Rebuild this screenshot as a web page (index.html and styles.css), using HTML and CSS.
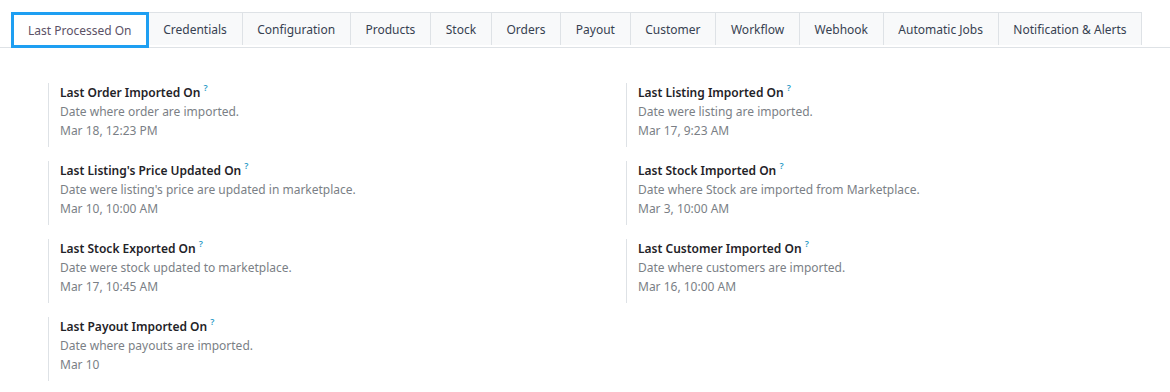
FILE: index.html
```html
<!DOCTYPE html>
<html lang="en">

<head>
    <meta charset="UTF-8">
    <meta name="viewport" content="width=device-width, initial-scale=1.0">
    <title>Last Processed On</title>
    <link rel="stylesheet" href="styles.css">
</head>

<body>

    <ul class="tabs">
        <li class="tab active">Last Processed On</li>
        <li class="tab">Credentials</li>
        <li class="tab">Configuration</li>
        <li class="tab">Products</li>
        <li class="tab">Stock</li>
        <li class="tab">Orders</li>
        <li class="tab">Payout</li>
        <li class="tab">Customer</li>
        <li class="tab">Workflow</li>
        <li class="tab">Webhook</li>
        <li class="tab">Automatic Jobs</li>
        <li class="tab">Notification &amp; Alerts</li>
    </ul>

    <div class="fields">
        <div class="field">
            <div class="label">Last Order Imported On <sup class="help">?</sup></div>
            <div class="desc">Date where order are imported.</div>
            <div class="value">Mar 18, 12:23 PM</div>
        </div>
        <div class="field">
            <div class="label">Last Listing Imported On <sup class="help">?</sup></div>
            <div class="desc">Date were listing are imported.</div>
            <div class="value">Mar 17, 9:23 AM</div>
        </div>
        <div class="field">
            <div class="label">Last Listing's Price Updated On <sup class="help">?</sup></div>
            <div class="desc">Date were listing's price are updated in marketplace.</div>
            <div class="value">Mar 10, 10:00 AM</div>
        </div>
        <div class="field">
            <div class="label">Last Stock Imported On <sup class="help">?</sup></div>
            <div class="desc">Date where Stock are imported from Marketplace.</div>
            <div class="value">Mar 3, 10:00 AM</div>
        </div>
        <div class="field">
            <div class="label">Last Stock Exported On <sup class="help">?</sup></div>
            <div class="desc">Date were stock updated to marketplace.</div>
            <div class="value">Mar 17, 10:45 AM</div>
        </div>
        <div class="field">
            <div class="label">Last Customer Imported On <sup class="help">?</sup></div>
            <div class="desc">Date where customers are imported.</div>
            <div class="value">Mar 16, 10:00 AM</div>
        </div>
        <div class="field">
            <div class="label">Last Payout Imported On <sup class="help">?</sup></div>
            <div class="desc">Date where payouts are imported.</div>
            <div class="value">Mar 10</div>
        </div>
    </div>

</body>

</html>
```

FILE: styles.css
```css
body {
    font-family: "Noto Sans", sans-serif;
    font-size: 12px;
    margin: 0;
    padding: 12px 0 0 0;
    background-color: #fff;
    color: #212529;
}

.tabs {
    display: flex;
    list-style: none;
    margin: 0;
    padding: 0 0 0 11px;
    border-bottom: 1px solid #dee2e6;
}

.tab {
    height: 32px;
    line-height: 33px;
    padding: 0 14.7px;
    background-color: #f8f9fa;
    border: 1px solid #dee2e6;
    border-bottom: none;
    border-left: none;
    color: #374151;
    white-space: nowrap;
}

.tab.active {
    background-color: #fff;
    color: #5c5266;
    border: 3px solid #1e9ff2;
    height: 30px;
    line-height: 31px;
    margin-bottom: -1px;
    padding: 0 14px;
}

.fields {
    display: grid;
    grid-template-columns: 578px 1fr;
    row-gap: 14px;
    padding: 35px 0 0 48px;
}

.field {
    border-left: 1px solid #dee2e6;
    padding: 0 0 7px 11px;
    line-height: 19px;
}

.label {
    font-weight: 600;
    color: #1f2328;
}

.help {
    color: #2a9bc7;
    font-size: 9px;
    font-weight: 600;
    vertical-align: 6px;
    line-height: 0;
}

.desc,
.value {
    color: #7b7f86;
}
```
